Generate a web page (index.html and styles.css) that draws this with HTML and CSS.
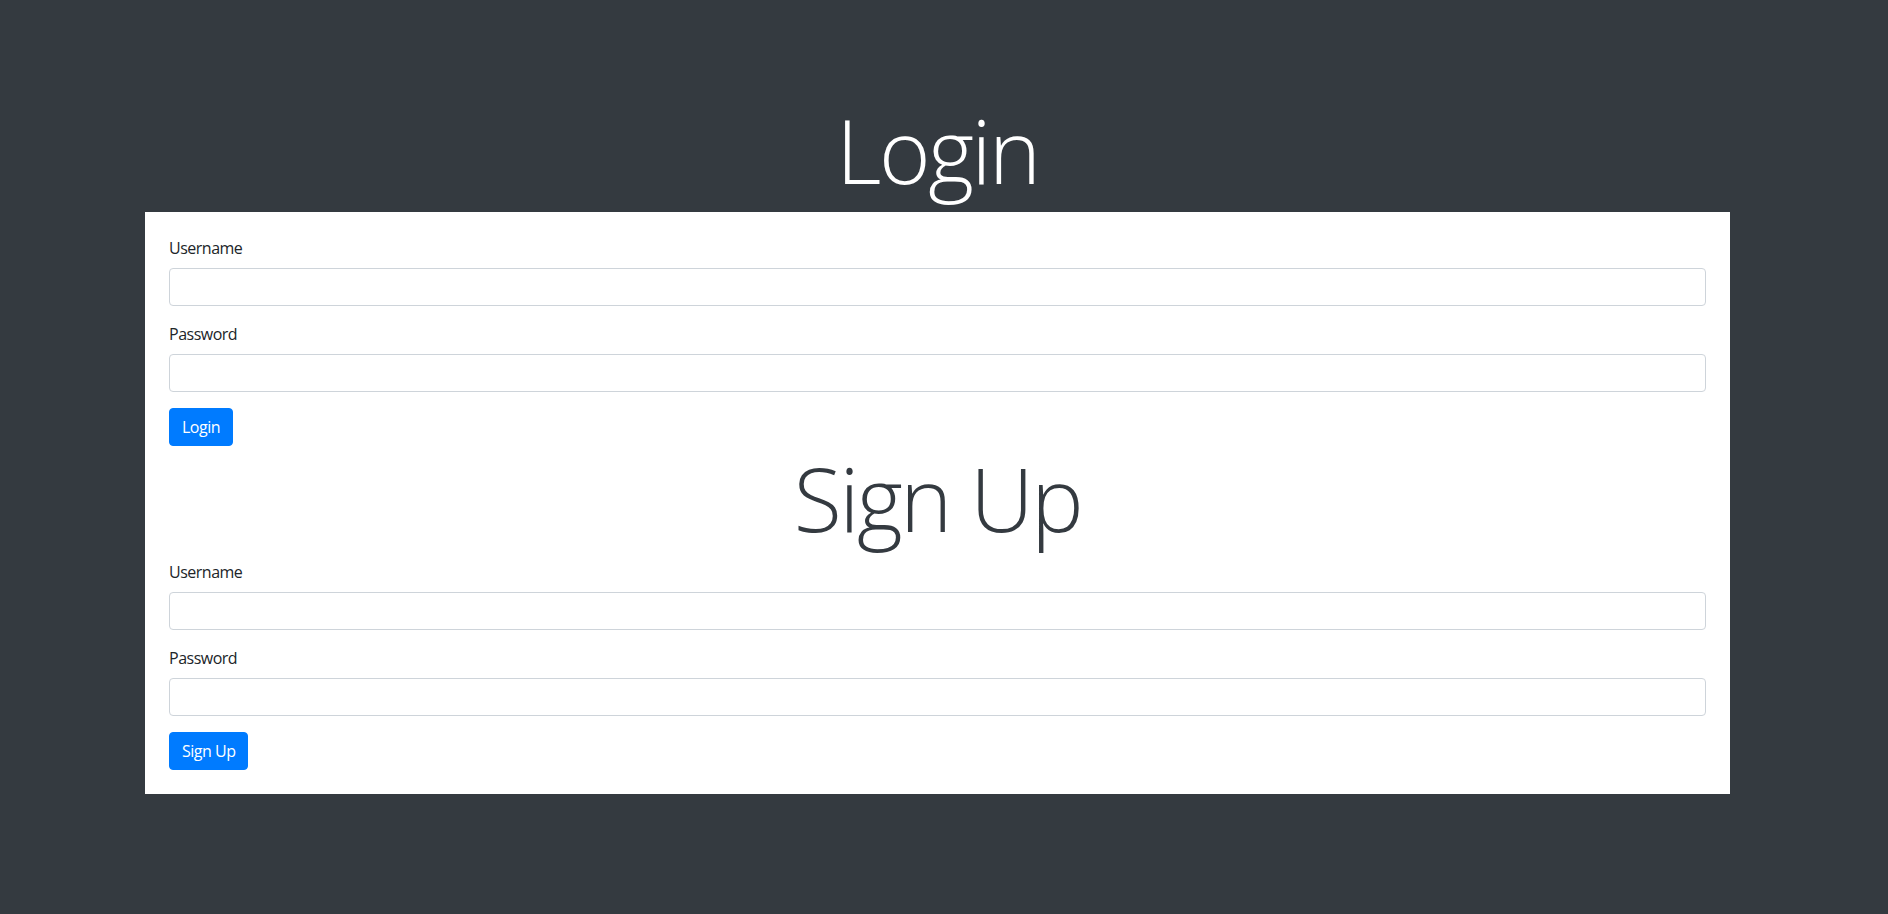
FILE: index.html
```html
<!DOCTYPE html>
<html lang="en">
<head>
<meta charset="utf-8">
<title>Login</title>
<link rel="stylesheet" href="styles.css">
</head>
<body>
<main class="page">
  <h1 class="display light">Login</h1>
  <section class="card">
    <form class="form">
      <div class="form-group">
        <label class="label" for="login-username">Username</label>
        <input class="input" id="login-username" type="text">
      </div>
      <div class="form-group">
        <label class="label" for="login-password">Password</label>
        <input class="input" id="login-password" type="password">
      </div>
      <button class="btn" type="button">Login</button>
    </form>
    <h1 class="display dark">Sign Up</h1>
    <form class="form">
      <div class="form-group">
        <label class="label" for="signup-username">Username</label>
        <input class="input" id="signup-username" type="text">
      </div>
      <div class="form-group">
        <label class="label" for="signup-password">Password</label>
        <input class="input" id="signup-password" type="password">
      </div>
      <button class="btn" type="button">Sign Up</button>
    </form>
  </section>
</main>
</body>
</html>
```

FILE: styles.css
```css
* {
  box-sizing: border-box;
}

html, body {
  margin: 0;
  padding: 0;
  height: 100%;
}

body {
  background: #343a40;
  color: #212529;
  font-family: "Open Sans", "Noto Sans", "Liberation Sans", sans-serif;
  font-size: 16px;
  line-height: 1.5;
}

.page {
  width: 1585px;
  margin-left: 145px;
  padding-top: 98.4px;
}

.display {
  margin: 0 0 8px 0;
  font-size: 88px;
  font-weight: 300;
  line-height: 105.6px;
  letter-spacing: -2.4px;
  text-align: center;
}

.light {
  color: #ffffff;
}

.dark {
  color: #343a40;
}

.card {
  background: #ffffff;
  padding: 24px;
}

.form {
  display: flex;
  flex-direction: column;
  align-items: flex-start;
}

.form-group {
  width: 100%;
  margin-bottom: 16px;
}

.label {
  display: inline-block;
  margin-bottom: 8px;
  font-size: 16px;
  line-height: 24px;
  letter-spacing: -0.5px;
}

.input {
  display: block;
  width: 100%;
  height: 38px;
  padding: 6px 12px;
  font: inherit;
  color: #495057;
  background: #ffffff;
  border: 1px solid #ced4da;
  border-radius: 4px;
}

.btn {
  height: 38px;
  padding: 6px 12px;
  font: inherit;
  font-size: 16px;
  line-height: 24px;
  letter-spacing: -0.5px;
  color: #ffffff;
  background: #007bff;
  border: 1px solid #007bff;
  border-radius: 4px;
}
```
